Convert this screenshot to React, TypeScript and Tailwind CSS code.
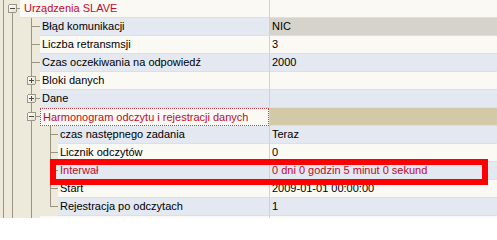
import React from "react";

type R = {
  level: 0 | 1 | 2;
  label: string;
  value?: string;
  group?: "plus" | "minus";
  red?: boolean;
  last?: boolean;
  focus?: boolean;
  valueKind?: "gray" | "khaki";
};

const rows: R[] = [
  { level: 0, label: "Urządzenia SLAVE", group: "minus", red: true },
  { level: 1, label: "Błąd komunikacji", value: "NIC", valueKind: "gray" },
  { level: 1, label: "Liczba retransmsji", value: "3" },
  { level: 1, label: "Czas oczekiwania na odpowiedź", value: "2000" },
  { level: 1, label: "Bloki danych", group: "plus" },
  { level: 1, label: "Dane", group: "plus" },
  { level: 1, label: "Harmonogram odczytu i rejestracji danych", group: "minus", red: true, focus: true, valueKind: "khaki" },
  { level: 2, label: "czas następnego zadania", value: "Teraz" },
  { level: 2, label: "Licznik odczytów", value: "0" },
  { level: 2, label: "Interwał", value: "0 dni 0 godzin 5 minut 0 sekund", red: true },
  { level: 2, label: "Start", value: "2009-01-01 00:00:00" },
  { level: 2, label: "Rejestracja po odczytach", value: "1", last: true },
  { level: 1, label: "" },
];

const LINE = "#999582";

function Box({ x, kind, id }: { x: number; kind: "plus" | "minus"; id: string }) {
  const y = 4;
  return (
    <g>
      <rect x={x + 0.5} y={y + 0.5} width={8} height={8} rx={1.5} fill={`url(#${id})`} stroke="#9c9886" />
      <line x1={x + 2} y1={y + 4.5} x2={x + 7} y2={y + 4.5} stroke="#4a4a4a" />
      {kind === "plus" && <line x1={x + 4.5} y1={y + 2} x2={x + 4.5} y2={y + 7} stroke="#4a4a4a" />}
    </g>
  );
}

function Gutter({ r, idx }: { r: R; idx: number }) {
  const w = r.level === 0 ? 20 : r.level === 1 ? 40 : 58;
  const id = `gb${idx}`;
  const cy = 8.5;
  return (
    <svg width={w} height={18} className="block" shapeRendering="crispEdges">
      <defs>
        <linearGradient id={id} x1="0" y1="0" x2="1" y2="1">
          <stop offset="0" stopColor="#ffffff" />
          <stop offset="1" stopColor="#e2ddcb" />
        </linearGradient>
      </defs>
      <line x1={3.5} y1={0} x2={3.5} y2={18} stroke={LINE} />
      {r.level === 0 ? (
        <>
          <Box x={8} kind={r.group || "minus"} id={id} />
          <line x1={12.5} y1={13} x2={12.5} y2={18} stroke={LINE} />
          <line x1={17} y1={cy} x2={20} y2={cy} stroke={LINE} />
        </>
      ) : (
        <line x1={12.5} y1={0} x2={12.5} y2={18} stroke={LINE} />
      )}
      {r.level === 1 &&
        (r.group ? (
          <>
            <line x1={31.5} y1={0} x2={31.5} y2={4} stroke={LINE} />
            <Box x={27} kind={r.group} id={id} />
            <line x1={31.5} y1={13} x2={31.5} y2={18} stroke={LINE} />
            <line x1={36} y1={cy} x2={40} y2={cy} stroke={LINE} />
          </>
        ) : (
          <>
            <line x1={31.5} y1={0} x2={31.5} y2={18} stroke={LINE} />
            <line x1={31.5} y1={cy} x2={40} y2={cy} stroke={LINE} />
          </>
        ))}
      {r.level === 2 && (
        <>
          <line x1={31.5} y1={0} x2={31.5} y2={18} stroke={LINE} />
          <line x1={50.5} y1={0} x2={50.5} y2={r.last ? 9 : 18} stroke={LINE} />
          <line x1={50.5} y1={cy} x2={58} y2={cy} stroke={LINE} />
        </>
      )}
    </svg>
  );
}

function Row({ r, idx }: { r: R; idx: number }) {
  const even = idx % 2 === 0;
  const bg = even ? "bg-[#fbf9f3]" : "bg-[#e3e8f1]";
  const nameBorder = r.focus
    ? "border border-dotted border-[#c0404a]"
    : "border-b border-[#e4e0cf]";
  const pad = r.level === 0 ? "pl-[4px]" : "pl-[2px]";
  const valueBg =
    r.valueKind === "gray" ? "bg-[#d6d3cc]" : r.valueKind === "khaki" ? "bg-[#d2c9a6]" : bg;
  const color = r.red ? "text-[#c20a2a]" : "text-black";
  return (
    <div className="flex h-[18px] shrink-0">
      <div className="shrink-0 bg-[#eeeadb]">
        <Gutter r={r} idx={idx} />
      </div>
      <div className={`flex-1 min-w-0 h-[18px] ${bg} ${nameBorder} ${pad} ${color} leading-[17px] whitespace-nowrap overflow-hidden`}>
        {r.label}
      </div>
      <div className={`w-[228px] shrink-0 h-[18px] border-l border-b border-l-[#d6d2c0] border-b-[#e4e0cf] ${valueBg} ${color} pl-[2px] leading-[17px] whitespace-nowrap overflow-hidden`}>
        {r.value || ""}
      </div>
    </div>
  );
}

export default function App() {
  return (
    <div
      className="relative w-[497px] h-[218px] overflow-hidden bg-[#eeeadb] text-[11px] flex flex-col"
      style={{ fontFamily: '"Liberation Sans", Arial, sans-serif' }}
    >
      {rows.map((r, i) => (
        <Row key={i} r={r} idx={i} />
      ))}
      <div className="absolute left-[50px] top-[159px] w-[438px] h-[26px] border-[6px] border-[#ff0000]" />
    </div>
  );
}
